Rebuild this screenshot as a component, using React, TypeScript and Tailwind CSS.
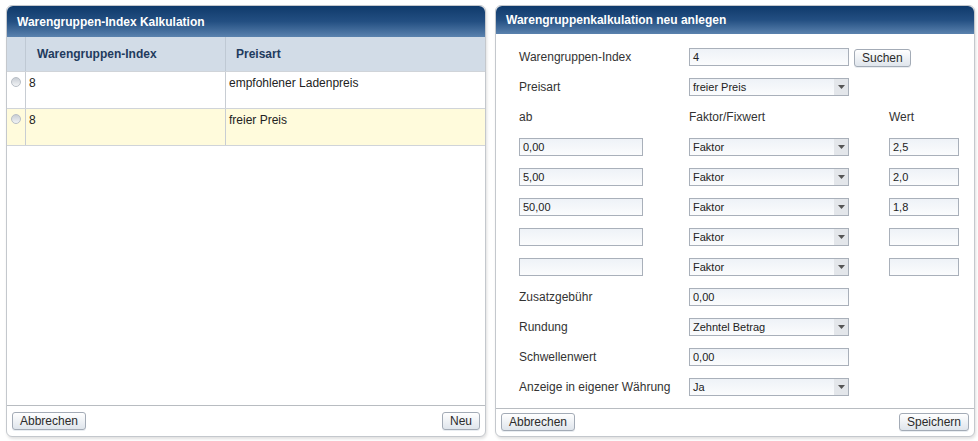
import React from 'react';

const font = { fontFamily: '"Liberation Sans", Arial, sans-serif' };

const Button: React.FC<{ label: string; className?: string }> = ({ label, className = '' }) => (
  <button
    className={`h-[18px] px-[7px] rounded-[3px] border border-[#a3abb6] bg-gradient-to-b from-[#ffffff] to-[#dfe5ec] text-[12px] leading-[16px] text-[#2b2b2b] shadow-[0_1px_0_#e9edf1] ${className}`}
  >
    {label}
  </button>
);

const TextInput: React.FC<{ value?: string; width: string }> = ({ value = '', width }) => (
  <div
    className={`${width} h-[18px] border border-[#a9b0ba] bg-gradient-to-b from-[#eef2f7] to-[#fbfcfd] px-[3px] text-[11px] leading-[16px] text-[#222]`}
  >
    {value}
  </div>
);

const Select: React.FC<{ value: string }> = ({ value }) => (
  <div className="w-[160px] h-[18px] flex border border-[#a9b0ba] bg-gradient-to-b from-[#eef2f7] to-[#fbfcfd] text-[11px] leading-[16px] text-[#222]">
    <div className="flex-1 px-[3px]">{value}</div>
    <div className="w-[14px] flex items-center justify-center bg-[#e3e6ea]">
      <svg width="7" height="4" viewBox="0 0 7 4">
        <path d="M0 0 L7 0 L3.5 4 Z" fill="#555" />
      </svg>
    </div>
  </div>
);

const Header: React.FC<{ title: string }> = ({ title }) => (
  <div className="h-[31px] rounded-t-[6px] bg-gradient-to-b from-[#0f3a6b] via-[#234f82] to-[#5a82ae] px-[10px] flex items-center text-white text-[12px] font-bold">
    {title}
  </div>
);

const Radio = () => (
  <div className="w-[10px] h-[10px] rounded-full border border-[#b8bec6] bg-gradient-to-b from-[#c9ced5] to-[#f2f4f6]" />
);

const rows = [
  { idx: '8', art: 'empfohlener Ladenpreis', bg: 'bg-white' },
  { idx: '8', art: 'freier Preis', bg: 'bg-[#fffbdc]' },
];

const steps = [
  { ab: '0,00', wert: '2,5' },
  { ab: '5,00', wert: '2,0' },
  { ab: '50,00', wert: '1,8' },
  { ab: '', wert: '' },
  { ab: '', wert: '' },
];

const FormRow: React.FC<{ label: string; children: React.ReactNode }> = ({ label, children }) => (
  <div className="h-[30px] flex items-start">
    <div className="w-[170px] pt-[1px] text-[12px] leading-[16px] text-[#333]">{label}</div>
    {children}
  </div>
);

export default function App() {
  return (
    <div className="w-[978px] h-[441px] bg-white flex gap-[9px] pl-[6px] pt-[5px]" style={font}>
      {/* left panel */}
      <div className="w-[480px] h-[432px] flex flex-col rounded-[6px] border border-[#c4c8cd] shadow-[1px_2px_3px_rgba(0,0,0,0.12)] bg-white">
        <Header title="Warengruppen-Index Kalkulation" />
        <div className="flex-1 flex flex-col">
          <div className="h-[34px] flex bg-[#d2dce7] text-[12px] font-bold text-[#1f3b5e]">
            <div className="w-[19px] border-r border-[#bfc9d4]" />
            <div className="w-[200px] border-r border-[#bfc9d4] pl-[11px] flex items-center">Warengruppen-Index</div>
            <div className="flex-1 pl-[10px] flex items-center">Preisart</div>
          </div>
          {rows.map((r, i) => (
            <div key={i} className={`h-[37px] flex border-t border-[#d0d4d9] text-[12px] text-[#222] ${r.bg}`}>
              <div className="w-[19px] border-r border-[#c8cdd3] pl-[4px] pt-[5px]">
                <Radio />
              </div>
              <div className="w-[200px] border-r border-[#c8cdd3] pl-[3px] pt-[2px]">{r.idx}</div>
              <div className="flex-1 pl-[3px] pt-[2px]">{r.art}</div>
            </div>
          ))}
          <div className="border-t border-[#d0d4d9]" />
        </div>
        <div className="h-[31px] border-t border-[#b8bcc1] flex items-center justify-between px-[5px]">
          <Button label="Abbrechen" />
          <Button label="Neu" />
        </div>
      </div>

      {/* right panel */}
      <div className="w-[480px] h-[432px] flex flex-col rounded-[6px] border border-[#c4c8cd] shadow-[1px_2px_3px_rgba(0,0,0,0.12)] bg-white">
        <Header title="Warengruppenkalkulation neu anlegen" />
        <div className="flex-1 pl-[23px] pt-[14px]">
          <FormRow label="Warengruppen-Index">
            <TextInput value="4" width="w-[160px]" />
            <Button label="Suchen" className="ml-[5px] mt-[1px] h-[17px]" />
          </FormRow>
          <FormRow label="Preisart">
            <Select value="freier Preis" />
          </FormRow>
          <div className="h-[30px] flex items-start pt-[1px] text-[12px] leading-[16px] text-[#333]">
            <div className="w-[170px]">ab</div>
            <div className="w-[200px]">Faktor/Fixwert</div>
            <div>Wert</div>
          </div>
          {steps.map((s, i) => (
            <div key={i} className="h-[30px] flex items-start">
              <div className="w-[170px]">
                <TextInput value={s.ab} width="w-[124px]" />
              </div>
              <div className="w-[200px]">
                <Select value="Faktor" />
              </div>
              <TextInput value={s.wert} width="w-[70px]" />
            </div>
          ))}
          <FormRow label="Zusatzgebühr">
            <TextInput value="0,00" width="w-[160px]" />
          </FormRow>
          <FormRow label="Rundung">
            <Select value="Zehntel Betrag" />
          </FormRow>
          <FormRow label="Schwellenwert">
            <TextInput value="0,00" width="w-[160px]" />
          </FormRow>
          <FormRow label="Anzeige in eigener Währung">
            <Select value="Ja" />
          </FormRow>
        </div>
        <div className="h-[31px] border-t border-[#b8bcc1] flex items-center justify-between px-[5px]">
          <Button label="Abbrechen" />
          <Button label="Speichern" />
        </div>
      </div>
    </div>
  );
}
